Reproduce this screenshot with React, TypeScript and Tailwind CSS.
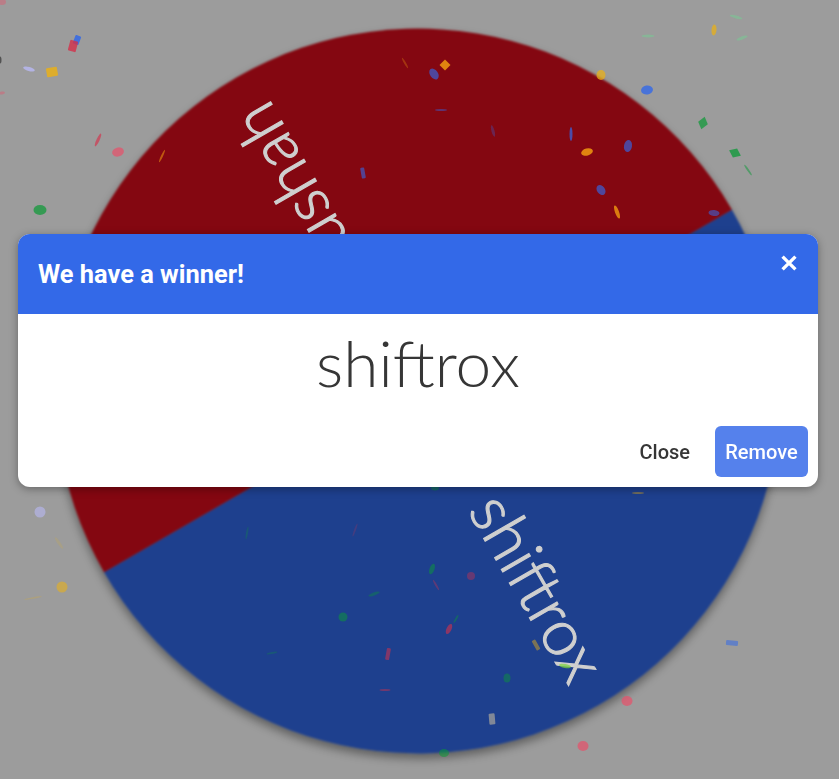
type Piece = [number, number, number, number, number, string, "e" | "r" | "d", number];

const B = "#3369e8";
const R = "#d5304a";
const Y = "#eeb211";
const G = "#0a9a35";
const O = "#f09a10";

const confetti: Piece[] = [
  [77, 40, 6, 9, 20, B, "r", 0.85], [73, 46, 8, 11, 15, R, "r", 0.8], [29, 69, 12, 4, 15, "#b9b9f5", "e", 0.8],
  [52, 72, 11, 9, -10, Y, "r", 0.8], [98, 140, 3, 14, 25, R, "e", 0.65], [118, 152, 12, 9, -15, "#e8506a", "e", 0.7],
  [40, 210, 13, 10, 0, G, "e", 0.7], [162, 156, 2, 14, 25, O, "e", 0.55], [363, 173, 4, 11, -10, B, "r", 0.6],
  [405, 63, 2, 12, -30, O, "e", 0.3], [445, 65, 11, 11, 0, O, "d", 0.85], [434, 74, 8, 12, -35, B, "e", 0.65],
  [441, 110, 12, 2, 0, B, "e", 0.45], [493, 131, 3, 12, -15, B, "e", 0.3], [571, 134, 3, 14, 0, B, "e", 0.7],
  [587, 152, 12, 7, -15, O, "e", 0.85], [628, 146, 8, 12, 10, B, "e", 0.65], [601, 190, 8, 11, -35, B, "e", 0.65],
  [617, 212, 4, 14, -20, O, "e", 0.8], [601, 75, 9, 10, 0, Y, "e", 0.7], [647, 90, 12, 9, -10, B, "e", 0.8],
  [703, 123, 10, 13, 15, G, "d", 0.7], [735, 153, 13, 10, 25, G, "d", 0.75], [748, 170, 2, 13, -35, G, "e", 0.5],
  [714, 30, 5, 11, 5, Y, "e", 0.7], [648, 36, 13, 3, 0, "#7cc795", "e", 0.6], [736, 17, 13, 3, 15, "#7cc795", "e", 0.6],
  [742, 38, 12, 3, -20, "#7cc795", "e", 0.6], [714, 213, 11, 6, 5, B, "e", 0.55], [40, 512, 11, 11, 0, "#b9b9f5", "e", 0.6],
  [59, 543, 3, 14, -35, Y, "e", 0.15], [62, 587, 11, 11, 0, Y, "e", 0.55], [33, 598, 18, 1.5, -10, Y, "e", 0.2],
  [247, 533, 2, 13, 10, G, "e", 0.25], [355, 530, 2, 14, 20, R, "e", 0.2], [374, 594, 12, 3, -20, G, "e", 0.35],
  [343, 617, 9, 9, 0, G, "e", 0.5], [272, 653, 11, 2, -10, G, "e", 0.25], [388, 654, 4, 12, 10, R, "r", 0.55],
  [385, 690, 11, 2, 0, R, "e", 0.45], [638, 493, 12, 2, 0, Y, "e", 0.4], [435, 488, 8, 5, 0, G, "e", 0.4],
  [432, 569, 5, 11, 20, G, "e", 0.5], [471, 576, 8, 8, 0, R, "e", 0.4], [436, 585, 2, 12, -30, R, "e", 0.35],
  [449, 629, 5, 11, 25, R, "e", 0.6], [456, 619, 2, 9, 30, G, "e", 0.4], [536, 645, 4, 11, -30, Y, "r", 0.45],
  [565, 666, 12, 4, 10, "#7ad53a", "e", 0.7], [507, 678, 7, 9, 0, G, "e", 0.45], [492, 719, 6, 11, -5, "#9a9a9a", "r", 0.8],
  [444, 753, 10, 8, 0, G, "e", 0.55], [627, 701, 11, 10, 0, "#e8506a", "e", 0.7], [583, 746, 11, 10, 0, "#e8506a", "e", 0.7],
  [732, 643, 12, 5, 5, B, "r", 0.55], [0, 60, 3, 7, 0, "#333333", "e", 0.7], [2, 93, 6, 3, -10, "#e8506a", "e", 0.4],
  [2, 2, 8, 6, 0, "#e8506a", "e", 0.4],
];

export default function App() {
  const wheelFont = { fontFamily: "Lato, sans-serif" };
  return (
    <div className="relative h-[779px] w-[839px] overflow-hidden bg-white">
      <svg viewBox="0 0 839 779" className="block h-[779px] w-[839px]">
        <defs>
          <filter id="wheelShadow" x="-10%" y="-10%" width="120%" height="120%">
            <feDropShadow dx="0" dy="5" stdDeviation="5" floodColor="#000" floodOpacity="0.4" />
          </filter>
        </defs>
        <g filter="url(#wheelShadow)">
          <path d="M104.0658 572.25 A362.5 362.5 0 0 0 731.9342 209.75 Z" fill="#3369e8" />
          <path d="M104.0658 572.25 A362.5 362.5 0 0 1 731.9342 209.75 Z" fill="#d8101f" />
        </g>
      </svg>
      <div className="absolute inset-0 bg-[rgba(0,0,0,0.39)] backdrop-blur-[1px]" />
      <svg viewBox="0 0 839 779" className="absolute inset-0 h-[779px] w-[839px] blur-[0.6px]">
        <text
          transform="translate(418 391) rotate(60)"
          x="332"
          y="17"
          textAnchor="end"
          fontSize="64"
          fontWeight="300"
          fill="#cfcfcf"
          stroke="#cfcfcf"
          strokeWidth="1.1"
          style={wheelFont}
        >
          shiftrox
        </text>
        <text
          transform="translate(418 391) rotate(240)"
          x="329"
          y="17"
          textAnchor="end"
          fontSize="64"
          fontWeight="300"
          fill="#cfcfcf"
          stroke="#cfcfcf"
          strokeWidth="1.1"
          style={wheelFont}
        >
          ushah
        </text>
        {confetti.map(([x, y, w, h, r, c, kind, o], i) => {
          const t = `rotate(${r} ${x} ${y})`;
          if (kind === "e") return <ellipse key={i} cx={x} cy={y} rx={w / 2} ry={h / 2} fill={c} opacity={o} transform={t} />;
          if (kind === "d")
            return (
              <polygon
                key={i}
                points={`${x - w / 2},${y} ${x},${y - h / 2} ${x + w / 2},${y} ${x},${y + h / 2}`}
                fill={c}
                opacity={o}
                transform={t}
              />
            );
          return <rect key={i} x={x - w / 2} y={y - h / 2} width={w} height={h} rx={1} fill={c} opacity={o} transform={t} />;
        })}
      </svg>
      <div className="absolute left-[18px] top-[234px] w-[800px] overflow-hidden rounded-xl bg-white shadow-[0_2px_8px_rgba(0,0,0,0.35)]">
        <header className="relative flex h-20 items-center bg-[#3369e8] pl-5">
          <h2 className="font-['Roboto',sans-serif] text-[25.4px] font-bold text-white">We have a winner!</h2>
          <button className="absolute right-5 top-5 text-white">
            <svg viewBox="0 0 14 14" className="block h-[18px] w-[18px]">
              <path d="M2 2 L12 12 M12 2 L2 12" stroke="currentColor" strokeWidth="2.6" />
            </svg>
          </button>
        </header>
        <div className="flex h-[112px] items-center justify-center pb-[14px]">
          <span className="font-['Lato',sans-serif] text-[64px] font-light text-[#363636]">shiftrox</span>
        </div>
        <footer className="flex h-[61px] items-start justify-end gap-2.5 pr-2.5">
          <button className="flex h-[51px] items-center px-[15px] font-['Roboto',sans-serif] text-xl font-medium text-[#363636]">
            Close
          </button>
          <button className="flex h-[51px] w-[93px] items-center justify-center rounded-md bg-[#5581ec] font-['Roboto',sans-serif] text-xl font-medium text-white">
            Remove
          </button>
        </footer>
      </div>
    </div>
  );
}
